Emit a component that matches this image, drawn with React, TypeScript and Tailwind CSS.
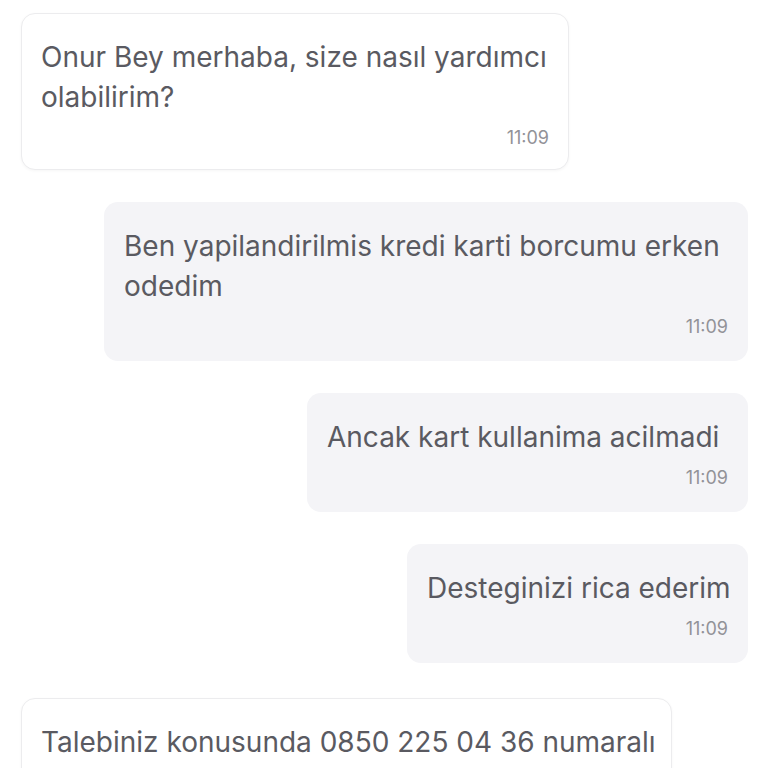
type Msg = { lines: string[]; time?: string; mine: boolean; width: string };

const messages: Msg[] = [
  { lines: ["Onur Bey merhaba, size nasıl yardımcı", "olabilirim?"], time: "11:09", mine: false, width: "w-[548px]" },
  { lines: ["Ben yapilandirilmis kredi karti borcumu erken", "odedim"], time: "11:09", mine: true, width: "w-[644px]" },
  { lines: ["Ancak kart kullanima acilmadi"], time: "11:09", mine: true, width: "w-[441px]" },
  { lines: ["Desteginizi rica ederim"], time: "11:09", mine: true, width: "w-[341px]" },
  { lines: ["Talebiniz konusunda 0850 225 04 36 numaralı"], mine: false, width: "w-[651px]" },
];

function Bubble({ msg, last }: { msg: Msg; last: boolean }) {
  return (
    <div
      className={
        msg.mine
          ? `${msg.width} self-end rounded-[14px] bg-[#f4f4f7] px-[20px] pb-[22px] pt-6`
          : `${msg.width} ${last ? "mt-[3px] min-h-[120px] shrink-0" : ""} self-start rounded-[14px] border border-[#ececee] bg-white px-[19px] pb-[19px] pt-[23px] shadow-[0_1px_3px_rgba(0,0,0,0.04)]`
      }
    >
      <div className="text-[28px] leading-[40px] text-[#5a5a61]">
        {msg.lines.map((l) => (
          <div key={l} className="whitespace-nowrap">
            {l}
          </div>
        ))}
      </div>
      {msg.time ? (
        <div className="mt-[9px] text-right text-[18px] leading-6 text-[#929298]">{msg.time}</div>
      ) : null}
    </div>
  );
}

export default function App() {
  return (
    <div
      className="flex h-[768px] flex-col gap-[32px] overflow-hidden bg-white pl-[21px] pr-5 pt-[13px]"
      style={{ fontFamily: "Inter, 'Noto Sans', sans-serif" }}
    >
      {messages.map((m, i) => (
        <Bubble key={i} msg={m} last={i === messages.length - 1} />
      ))}
    </div>
  );
}
